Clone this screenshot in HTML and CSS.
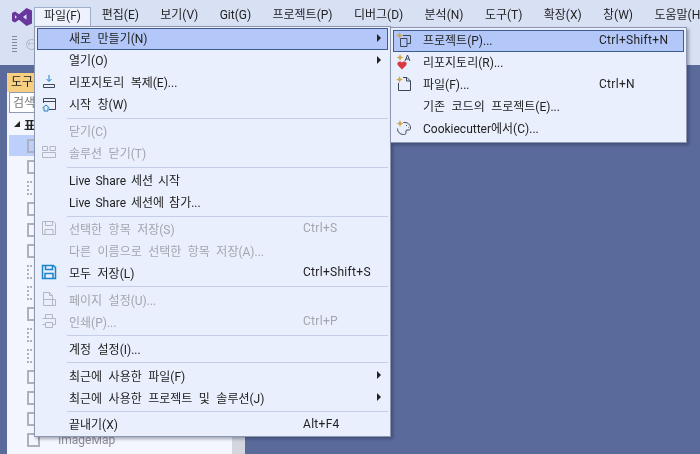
FILE: index.html
```html
<!DOCTYPE html>
<html lang="ko">
<head>
<meta charset="utf-8">
<title>파일 메뉴</title>
<link rel="stylesheet" href="styles.css">
</head>
<body>
<div class="app">
  <header class="menubar">
    <svg class="logo" viewBox="0 0 20 18"><path d="M14.500 0 L20 2.500 V15.500 L14.500 18 L7 11.800 L3 14.500 L0 13 V5 L3 3.500 L7 6.200 Z M14.500 6.300 L11 9 L14.500 11.700 Z M3 7.300 V10.700 L5 9 Z" fill-rule="evenodd"/></svg>
    <nav class="menus">
      <span class="top active">파일(F)</span>
      <span class="top">편집(E)</span>
      <span class="top">보기(V)</span>
      <span class="top">Git(G)</span>
      <span class="top">프로젝트(P)</span>
      <span class="top">디버그(D)</span>
      <span class="top">분석(N)</span>
      <span class="top">도구(T)</span>
      <span class="top">확장(X)</span>
      <span class="top">창(W)</span>
      <span class="top">도움말(H)</span>
    </nav>
  </header>
  <div class="toolbar">
    <div class="gripper"></div>
    <div class="back">←</div>
  </div>
  <main class="workspace">
    <aside class="toolwin">
      <div class="tw-title">도구 상자</div>
      <div class="tw-search">검색</div>
      <div class="tw-body">
        <div class="tw-list">
          <div class="tw-group"><span class="tri"></span>표준</div>
          <div class="tw-row sel"><span class="tw-ic"></span></div>
          <div class="tw-row"><span class="tw-ic"></span></div>
          <div class="tw-row"><span class="tw-ic dot"></span></div>
          <div class="tw-row"><span class="tw-ic"></span></div>
          <div class="tw-row"><span class="tw-ic"></span></div>
          <div class="tw-row"><span class="tw-ic"></span></div>
          <div class="tw-row"><span class="tw-ic dot"></span></div>
          <div class="tw-row"><span class="tw-ic dot"></span></div>
          <div class="tw-row"><span class="tw-ic"></span></div>
          <div class="tw-row"><span class="tw-ic dot"></span></div>
          <div class="tw-row"><span class="tw-ic dot"></span></div>
          <div class="tw-row"><span class="tw-ic"></span></div>
          <div class="tw-row"><span class="tw-ic"></span></div>
          <div class="tw-row"><span class="tw-ic"></span></div>
          <div class="tw-row"><span class="tw-ic"></span><span class="tw-name">ImageMap</span></div>
        </div>
        <div class="tw-scroll"></div>
      </div>
    </aside>
  </main>
</div>

<div class="menu file-menu">
  <div class="item hot"><span class="ic"></span><span class="lbl">새로 만들기(N)</span><span class="key"></span><span class="arrow"></span></div>
  <div class="item"><span class="ic"></span><span class="lbl">열기(O)</span><span class="key"></span><span class="arrow"></span></div>
  <div class="item"><span class="ic"><svg viewBox="0 0 16 16"><path class="s-blue" d="M8 1v6M5.500 5L8 7.500 10.500 5"/><path class="s-dark" d="M2.500 10.500h11v3h-11z"/></svg></span><span class="lbl">리포지토리 복제(E)...</span></div>
  <div class="item"><span class="ic"><svg viewBox="0 0 16 16"><path class="s-dark" d="M2.500 7V2.500h12v11H8"/><path class="s-dark" d="M2.500 5.500h12"/><path class="s-blue" d="M1.500 12L5 9l3.500 3M3 11.500V15h4v-3.500"/></svg></span><span class="lbl">시작 창(W)</span></div>
  <div class="sep"></div>
  <div class="item off"><span class="ic"></span><span class="lbl">닫기(C)</span></div>
  <div class="item off"><span class="ic"><svg viewBox="0 0 16 16"><path class="s-off" d="M1.500 1.500h5v4h-5zM1.500 7.500h13v5h-13zM9 1.500h5.500v4H9z"/></svg></span><span class="lbl">솔루션 닫기(T)</span></div>
  <div class="sep"></div>
  <div class="item"><span class="ic"></span><span class="lbl latin">Live Share 세션 시작</span></div>
  <div class="item"><span class="ic"></span><span class="lbl latin">Live Share 세션에 참가...</span></div>
  <div class="sep"></div>
  <div class="item off"><span class="ic"><svg viewBox="0 0 16 16"><path class="s-off" d="M1.500 1.500h11l2 2v11h-13zM4.500 1.500v4h7v-4M4 14.500v-5h8v5"/></svg></span><span class="lbl">선택한 항목 저장(S)</span><span class="key">Ctrl+S</span></div>
  <div class="item off"><span class="ic"></span><span class="lbl">다른 이름으로 선택한 항목 저장(A)...</span></div>
  <div class="item"><span class="ic"><svg viewBox="0 0 16 16"><path class="s-save" d="M1.500 1.500h11l2 2v11h-13zM4.500 1.500v4h7v-4M4 14.500v-5h8v5"/></svg></span><span class="lbl">모두 저장(L)</span><span class="key">Ctrl+Shift+S</span></div>
  <div class="sep"></div>
  <div class="item off"><span class="ic"><svg viewBox="0 0 16 16"><path class="s-off" d="M2.500 1.500h6l3 3v4h3v6h-12zM8.500 1.500v3h3M2.500 8.500h9v6"/></svg></span><span class="lbl">페이지 설정(U)...</span></div>
  <div class="item off"><span class="ic"><svg viewBox="0 0 16 16"><path class="s-off" d="M4.500 5V1.500h7V5M1.500 5.500h13v6h-3M4.500 11.500h-3M4.500 9.500h7v5h-7z"/></svg></span><span class="lbl">인쇄(P)...</span><span class="key">Ctrl+P</span></div>
  <div class="sep"></div>
  <div class="item"><span class="ic"></span><span class="lbl">계정 설정(I)...</span></div>
  <div class="sep"></div>
  <div class="item"><span class="ic"></span><span class="lbl">최근에 사용한 파일(F)</span><span class="key"></span><span class="arrow"></span></div>
  <div class="item"><span class="ic"></span><span class="lbl">최근에 사용한 프로젝트 및 솔루션(J)</span><span class="key"></span><span class="arrow"></span></div>
  <div class="sep"></div>
  <div class="item"><span class="ic"></span><span class="lbl">끝내기(X)</span><span class="key">Alt+F4</span></div>
</div>

<div class="menu sub-menu">
  <div class="item hot"><span class="ic"><svg viewBox="0 0 16 16"><path class="star" d="M3.500 0l1 2.500L7 3.500 4.500 4.500 3.500 7l-1-2.500L0 3.500l2.500-1z"/><path class="s-dark" d="M7 3.500h7.500v8H11M4.500 6.500h6.500v8H4.500z"/></svg></span><span class="lbl">프로젝트(P)...</span><span class="key">Ctrl+Shift+N</span></div>
  <div class="item"><span class="ic"><svg viewBox="0 0 16 16"><path class="star" d="M4 0l1 2.500L7.500 3.500 5 4.500 4 7 3 4.500.500 3.500 3 2.500z"/><path class="s-dark" d="M9 7l2.500-6L14 7M10 5h3"/><path class="heart" d="M6 15.500L1.800 11.200a2.400 2.400 0 0 1 4.200-2.500 2.400 2.400 0 0 1 4.200 2.500z"/></svg></span><span class="lbl">리포지토리(R)...</span></div>
  <div class="item"><span class="ic"><svg viewBox="0 0 16 16"><path class="star" d="M3.500 0l1 2.500L7 3.500 4.500 4.500 3.500 7l-1-2.500L0 3.500l2.500-1z"/><path class="s-dark" d="M7 1.500h4l3.500 3.500v9.500h-12V7M10.500 1.500V5h4"/></svg></span><span class="lbl">파일(F)...</span><span class="key">Ctrl+N</span></div>
  <div class="item"><span class="ic"></span><span class="lbl">기존 코드의 프로젝트(E)...</span></div>
  <div class="item"><span class="ic"><svg viewBox="0 0 16 16"><path class="star" d="M4 0l1 2.500L7.500 3.500 5 4.500 4 7 3 4.500.500 3.500 3 2.500z"/><path class="s-dark" d="M7.500 2.500c4-.5 7 2 7 5.500 0 2.500-2 2-3.500 2-1.500 0-1 2-1 3 0 1-1 1.500-2.500 1.500C4 14.500 1.500 12 1.500 8.500M10 5.500h1M12 7.500h.5"/></svg></span><span class="lbl">Cookiecutter에서(C)...</span></div>
</div>
</body>
</html>
```
FILE: styles.css
```css
* { box-sizing: border-box; }
html, body { margin: 0; height: 100%; overflow: hidden; }
body {
  font-family: Roboto, "Noto Sans CJK KR", sans-serif;
  font-size: 12px;
  color: #222;
  background: #5a6a9a;
}
.app { width: 700px; height: 454px; display: flex; flex-direction: column; filter: blur(.35px); }

.menubar {
  height: 26px;
  flex: none;
  background: #d8e1f4;
  display: flex;
  align-items: flex-start;
}
.logo { width: 20px; height: 18px; margin: 8px 0 0 12px; fill: #68389c; flex: none; }
.menus { display: flex; margin-left: 2px; padding-top: 7px; }
.top {
  height: 19px;
  line-height: 16px;
  padding: 0 10.700px;
  white-space: nowrap;
}
.top.active {
  width: 57px;
  padding: 0 9px;
  background: #edf2fd;
  border: 1px solid #9fb0cc;
  border-bottom: 0;
}
.toolbar {
  height: 39px;
  flex: none;
  background: #d8e1f4;
  display: flex;
  align-items: center;
  padding: 0 0 2px 12px;
  gap: 9px;
}
.gripper {
  width: 5px;
  height: 19px;
  background-image: radial-gradient(circle, #7f88a0 45%, transparent 50%);
  background-size: 2.500px 3px;
}
.back {
  width: 11px;
  height: 11px;
  border: 1px solid #a9b2c6;
  border-radius: 50%;
  color: #a9b2c6;
  font-size: 8px;
  line-height: 9px;
  text-align: center;
}
.workspace { flex: 1; padding: 8px 0 0 7px; min-height: 0; }
.toolwin { width: 238px; height: 100%; display: flex; flex-direction: column; background: #f4f6fd; }
.tw-title { height: 19px; flex: none; background: #f6cf81; padding-left: 4px; line-height: 19px; }
.tw-search {
  height: 21px;
  flex: none;
  margin: 0 0 0 2px;
  padding-left: 3px;
  line-height: 20px;
  background: #fff;
  border: 1px solid #8f9ab3;
  color: #777;
}
.tw-body { flex: 1; min-height: 0; display: flex; }
.tw-list { flex: 1; min-width: 0; overflow: hidden; padding-left: 2px; }
.tw-scroll { width: 13px; flex: none; background: #d4d6de; }
.tw-group { height: 22px; display: flex; align-items: center; gap: 4px; padding-left: 5px; font-weight: 700; }
.tri { width: 0; height: 0; border-style: solid; border-width: 0 0 6px 6px; border-color: transparent transparent #222 transparent; }
.tw-row { height: 21px; display: flex; align-items: center; padding-left: 18px; gap: 18px; }
.tw-row.sel { background: #bcd0fb; }
.tw-ic { width: 13px; height: 14px; border: 2px solid #aeb2bd; flex: none; }
.tw-ic.dot { border-style: dotted; }
.tw-name { color: #8d8d94; }

.menu {
  position: absolute;
  background: #e9effc;
  border: 1px solid #8d98b0;
  box-shadow: 2px 2px 3px rgba(20, 30, 60, .35);
  padding: 1px 2px;
  filter: blur(.35px);
}
.file-menu { left: 34px; top: 26px; width: 357px; height: 411px; }
.sub-menu { left: 390px; top: 27px; width: 297px; height: 116px; padding-top: 2px; z-index: 2; }
.item { height: 21.950px; display: flex; align-items: center; white-space: nowrap; padding-bottom: 2px; }
.item.hot { background: #b3c8f9; outline: 1px solid #3f5c90; outline-offset: -1px; }
.item.off { color: #a2a5ae; }
.ic { width: 32px; flex: none; display: flex; padding-left: 4px; }
.ic svg { width: 16px; height: 16px; display: block; }
.lbl { width: 234px; flex: none; word-spacing: 3.500px; }
.lbl.latin { word-spacing: 2px; }
.key { letter-spacing: .3px; }
.file-menu .key { width: 74px; flex: none; }
.arrow { width: 0; height: 0; border-style: solid; border-width: 4px 0 4px 4px; border-color: transparent transparent transparent #222; }
.sub-menu .ic { width: 30px; padding-left: 3px; }
.sub-menu .lbl { width: 176px; }
.sep { height: 1px; margin: 2px 0 2px 30px; background: #c4cee6; }

.ic path { fill: none; stroke-width: 1; }
.s-blue { stroke: #1f7fc4; }
.s-dark { stroke: #3c4658; }
.s-off { stroke: #b4b7c0; }
.ic .s-save { stroke: #1b82cc; stroke-width: 1.500; }
.ic .star { fill: #d2a648; stroke: none; }
.ic .heart { fill: #d93a3f; stroke: none; }
```
